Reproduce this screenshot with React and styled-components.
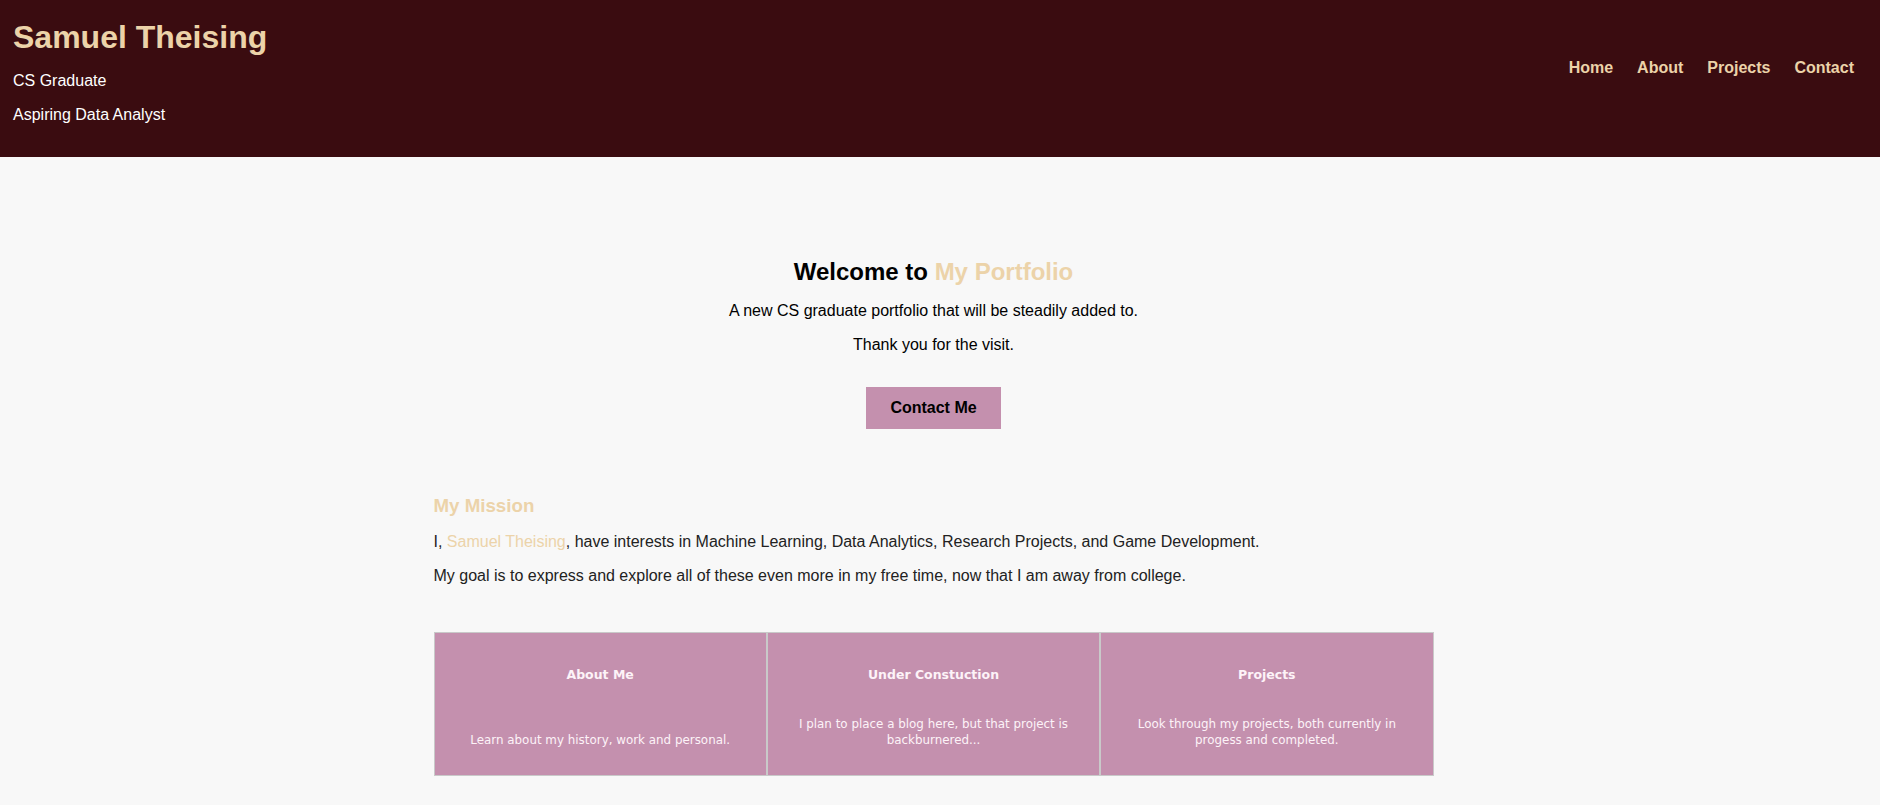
import styled, { createGlobalStyle } from 'styled-components';

const GlobalStyle = createGlobalStyle`
    body {
        margin: 0;
        background: #f8f8f8;
        font-family: "Liberation Sans", Arial, sans-serif;
        color: #000;
    }
`;

const Header = styled.header`
    display: flex;
    justify-content: space-between;
    align-items: flex-start;
    padding: 19px 14px 33px 13px;
    background: #3a0c10;
`;

const Name = styled.h1`
    margin: 0 0 16px;
    font-size: 32px;
    font-weight: bold;
    color: #ecd3a9;
`;

const Tagline = styled.p`
    margin: 0 0 16px;
    font-size: 16px;
    color: #ffffff;
    &:last-child {
        margin-bottom: 0;
    }
`;

const Nav = styled.nav`
    display: flex;
    margin-top: 40px;
`;

const NavLink = styled.a`
    padding: 0 12px;
    font-size: 16px;
    font-weight: bold;
    color: #ecd3a9;
    text-decoration: none;
    cursor: pointer;
`;

const Main = styled.main`
    padding-right: 13px;
`;

const Hero = styled.section`
    padding-top: 101px;
    text-align: center;
`;

const Welcome = styled.h2`
    margin: 0 0 16px;
    font-size: 24px;
    font-weight: bold;
`;

const Accent = styled.span`
    color: #ecd3a9;
`;

const HeroText = styled.p`
    margin: 0 0 16px;
    font-size: 16px;
`;

const ContactButton = styled.button`
    margin-top: 17px;
    padding: 12px 24px;
    border: none;
    background: #c490ae;
    font-family: inherit;
    font-size: 16px;
    font-weight: bold;
    color: #000;
    cursor: pointer;
`;

const Mission = styled.section`
    max-width: 1000px;
    margin: 66px auto 0;
`;

const MissionTitle = styled.h3`
    margin: 0 0 16px;
    font-size: 18.72px;
    font-weight: bold;
    color: #ecd3a9;
`;

const MissionText = styled.p`
    margin: 0 0 16px;
    font-size: 16px;
    color: #222222;
`;

const CardRow = styled.div`
    display: grid;
    grid-template-columns: repeat(3, 1fr);
    max-width: 1000px;
    margin: 47px auto 0;
`;

const Card = styled.div`
    display: flex;
    flex-direction: column;
    justify-content: space-between;
    height: 144px;
    box-sizing: border-box;
    padding: 34px 22px 27px;
    border: 1px solid #c9c9c9;
    background: #c490ae;
    font-family: "DejaVu Sans", Verdana, sans-serif;
    text-align: center;
    color: #fdf3f8;
    cursor: pointer;
`;

const CardTitle = styled.h4`
    margin: 0;
    font-size: 12.5px;
    line-height: 16px;
    font-weight: bold;
`;

const CardText = styled.p`
    margin: 0;
    font-size: 11.9px;
    line-height: 16px;
`;

const cards = [
    { title: 'About Me', text: 'Learn about my history, work and personal.' },
    { title: 'Under Constuction', text: 'I plan to place a blog here, but that project is backburnered...' },
    { title: 'Projects', text: 'Look through my projects, both currently in progess and completed.' },
];

function App() {
    return (
        <>
            <GlobalStyle />
            <Header>
                <div>
                    <Name>Samuel Theising</Name>
                    <Tagline>CS Graduate</Tagline>
                    <Tagline>Aspiring Data Analyst</Tagline>
                </div>
                <Nav>
                    <NavLink>Home</NavLink>
                    <NavLink>About</NavLink>
                    <NavLink>Projects</NavLink>
                    <NavLink>Contact</NavLink>
                </Nav>
            </Header>
            <Main>
                <Hero>
                    <Welcome>Welcome to <Accent>My Portfolio</Accent></Welcome>
                    <HeroText>A new CS graduate portfolio that will be steadily added to.</HeroText>
                    <HeroText>Thank you for the visit.</HeroText>
                    <ContactButton>Contact Me</ContactButton>
                </Hero>
                <Mission>
                    <MissionTitle>My Mission</MissionTitle>
                    <MissionText>
                        I, <Accent>Samuel Theising</Accent>, have interests in Machine Learning, Data Analytics, Research Projects, and Game Development.
                    </MissionText>
                    <MissionText>
                        My goal is to express and explore all of these even more in my free time, now that I am away from college.
                    </MissionText>
                </Mission>
                <CardRow>
                    {cards.map((card) => (
                        <Card key={card.title}>
                            <CardTitle>{card.title}</CardTitle>
                            <CardText>{card.text}</CardText>
                        </Card>
                    ))}
                </CardRow>
            </Main>
        </>
    );
}

export default App;
